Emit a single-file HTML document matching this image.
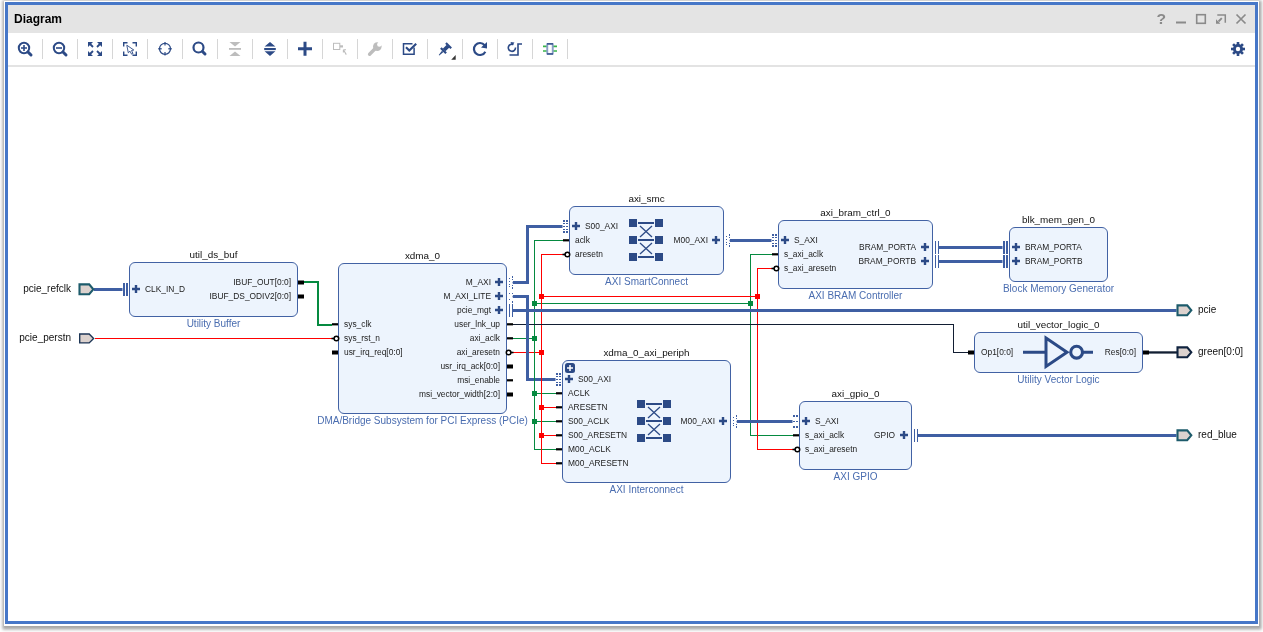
<!DOCTYPE html>
<html><head><meta charset="utf-8"><style>
html,body{margin:0;padding:0;background:#fff;width:1263px;height:632px;overflow:hidden}
svg{position:absolute;left:0;top:0;will-change:transform}
.tt{font-family:'Liberation Sans', sans-serif;font-size:9.9px;fill:#111}
.st{font-family:'Liberation Sans', sans-serif;font-size:10px;fill:#4a6db0}
.pt{font-family:'Liberation Sans', sans-serif;font-size:8.4px;fill:#222}
.lt{font-family:'Liberation Sans', sans-serif;font-size:10px;fill:#111}
</style></head><body>
<svg width="1263" height="632" viewBox="0 0 1263 632">
<defs><filter id="sh" x="-5%" y="-5%" width="110%" height="110%"><feGaussianBlur stdDeviation="1.4"/></filter></defs>
<rect x="0" y="0" width="1263" height="632" fill="#fff"/>
<rect x="2.5" y="0.5" width="1259" height="629" fill="#6a6a6a" opacity="0.6" filter="url(#sh)"/>
<rect x="4" y="1" width="1255" height="625" fill="#fff"/>
<rect x="5" y="2" width="1253" height="622" fill="#4677c8"/>
<rect x="8" y="5" width="1247" height="616" fill="#fff"/>
<rect x="8" y="5" width="1247" height="28" fill="#e4e4e4"/>
<rect x="8" y="65" width="1247" height="2" fill="#e3e3e3"/>
<text x="14" y="23" style="font: bold 12px 'Liberation Sans', sans-serif; fill:#000">Diagram</text>
<text x="1161.3" y="24" text-anchor="middle" style="font: bold 14px 'Liberation Sans', sans-serif; fill:#8a8a8a" transform="translate(1161.3 0) scale(1.12 1) translate(-1161.3 0)">?</text>
<rect x="1176" y="21.5" width="10" height="2" fill="#8a8a8a"/>
<rect x="1196.7" y="14.7" width="8.6" height="8.6" stroke="#8a8a8a" stroke-width="1.6" fill="none"/>
<path d="M1217.3 14.9H1225.3V22.7" stroke="#8a8a8a" stroke-width="1.5" fill="none"/>
<path d="M1221.8 18.2L1218.5 21.5" stroke="#8a8a8a" stroke-width="1.8" fill="none"/>
<path d="M1216 19.3V23.7H1220.4Z" fill="#8a8a8a"/>
<path d="M1236.5 14.5L1245.5 23.5M1245.5 14.5L1236.5 23.5" stroke="#8a8a8a" stroke-width="1.7"/>
<rect x="42" y="39" width="1" height="20" fill="#d6d6d6"/>
<rect x="77" y="39" width="1" height="20" fill="#d6d6d6"/>
<rect x="112" y="39" width="1" height="20" fill="#d6d6d6"/>
<rect x="147" y="39" width="1" height="20" fill="#d6d6d6"/>
<rect x="182" y="39" width="1" height="20" fill="#d6d6d6"/>
<rect x="217" y="39" width="1" height="20" fill="#d6d6d6"/>
<rect x="252" y="39" width="1" height="20" fill="#d6d6d6"/>
<rect x="287" y="39" width="1" height="20" fill="#d6d6d6"/>
<rect x="322" y="39" width="1" height="20" fill="#d6d6d6"/>
<rect x="357" y="39" width="1" height="20" fill="#d6d6d6"/>
<rect x="392" y="39" width="1" height="20" fill="#d6d6d6"/>
<rect x="427" y="39" width="1" height="20" fill="#d6d6d6"/>
<rect x="462" y="39" width="1" height="20" fill="#d6d6d6"/>
<rect x="497" y="39" width="1" height="20" fill="#d6d6d6"/>
<rect x="532" y="39" width="1" height="20" fill="#d6d6d6"/>
<rect x="567" y="39" width="1" height="20" fill="#d6d6d6"/>
<circle cx="24" cy="48.0" r="5.2" stroke="#2c4a86" stroke-width="2" fill="none"/>
<path d="M28 52L31 55" stroke="#2c4a86" stroke-width="3" stroke-linecap="round"/>
<path d="M21 48H27M24 45V51" stroke="#2c4a86" stroke-width="1.6"/>
<circle cx="59" cy="48.0" r="5.2" stroke="#2c4a86" stroke-width="2" fill="none"/>
<path d="M63 52L66 55" stroke="#2c4a86" stroke-width="3" stroke-linecap="round"/>
<path d="M56 48H62" stroke="#2c4a86" stroke-width="1.6"/>
<path d="M88 42H93L88 47Z M102 42H97L102 47Z M88 56H93L88 51Z M102 56H97L102 51Z" fill="#2c4a86"/>
<path d="M89 43L93 47M101 43L97 47M89 55L93 51M101 55L97 51" stroke="#2c4a86" stroke-width="1.8"/>
<path d="M123.7 46.5V42.7H127.5M132.5 42.7H136.3V46.5M136.3 51.5V55.3H132.5M127.5 55.3H123.7V51.5" stroke="#2c4a86" stroke-width="1.4" fill="none"/>
<path d="M126.8 45.2L128.3 52.8L130 51.2L131.6 54.2L133 53.5L131.5 50.5L133.8 50Z" stroke="#2c4a86" stroke-width="0.9" fill="#fff" stroke-linejoin="round"/>
<circle cx="165" cy="48.8" r="5.5" stroke="#2c4a86" stroke-width="1.25" fill="none"/>
<path d="M165 42V45.5M165 52.1V55.6M158.2 48.8H161.7M168.3 48.8H171.8" stroke="#2c4a86" stroke-width="1.4" opacity="0.85"/>
<circle cx="198.5" cy="47.5" r="5" stroke="#2c4a86" stroke-width="2.2" fill="none"/>
<path d="M202.5 51.5L205 54" stroke="#2c4a86" stroke-width="3" stroke-linecap="round"/>
<path d="M229.5 42H240.5L235 46.5Z M229.5 56H240.5L235 51.5Z" fill="#bdbdbd"/>
<rect x="229" y="48" width="12" height="1.8" fill="#bdbdbd"/>
<path d="M264.6 46.4H275.4L270 41.9Z M264.6 51.3H275.4L270 55.9Z" fill="#2c4a86"/>
<rect x="264.2" y="48" width="11.6" height="2.1" fill="#2c4a86"/>
<path d="M298 48.7H312M305 41.7V55.7" stroke="#2c4a86" stroke-width="3"/>
<rect x="333.5" y="43.3" width="6.3" height="6.2" stroke="#bdbdbd" stroke-width="1" fill="#fff"/>
<rect x="340" y="45.3" width="3" height="2.2" fill="#bdbdbd"/>
<path d="M346.3 54.6L343.6 50M343.4 49.8V52.6M343.4 49.8H346" stroke="#bdbdbd" stroke-width="1.1" fill="none"/>
<path d="M369.6 54.2L376 47.8" stroke="#bdbdbd" stroke-width="3.4" stroke-linecap="round"/>
<circle cx="377.3" cy="46.6" r="4.3" fill="#bdbdbd"/>
<circle cx="379.3" cy="44.5" r="2.2" fill="#fff"/>
<rect x="377.1" y="38" width="4.4" height="6.5" fill="#fff" transform="rotate(45 379.3 44.5)"/>
<path d="M412.5 43.7H403.5V54.2H414.1V47.5" stroke="#2c4a86" stroke-width="1.5" fill="none"/>
<path d="M406 47.3L409.3 50.6L416.2 43.7" stroke="#2c4a86" stroke-width="2.1" fill="none"/>
<g transform="translate(443.4 50.7) rotate(-45)" fill="#2c4a86"><rect x="-1" y="-3.7" width="2.2" height="7.4"/><rect x="1" y="-1.9" width="5.6" height="3.8"/><rect x="6.2" y="-3.7" width="2.2" height="7.4"/><path d="M-1 -1L-6.3 -0.3V0.5L-1 1Z"/></g>
<path d="M451.2 59.7H455.7V55Z" fill="#333"/>
<path d="M484.6 45.2A6 6 0 1 0 485.3 51.7" stroke="#2c4a86" stroke-width="2.2" fill="none"/>
<path d="M487 42L487 48.5L481 47.5Z" fill="#2c4a86"/>
<path d="M513.5 44.5A3.6 3.6 0 1 0 515.5 47.5" stroke="#2c4a86" stroke-width="1.6" fill="none"/>
<path d="M510.5 42L514.5 42.5L512 45.5Z" fill="#2c4a86"/>
<path d="M509.5 55H518V44H522" stroke="#2c4a86" stroke-width="1.6" fill="none"/>
<path d="M543 46.3H547M553 46.3H557M543 51H547M553 51H557" stroke="#39b54a" stroke-width="1.7"/>
<rect x="546.3" y="43.1" width="7.4" height="11.6" rx="0.8" fill="#8a9ec6"/>
<rect x="548.2" y="44.6" width="3.6" height="8.6" fill="#fff"/>
<rect x="547" y="43.1" width="6" height="1.5" fill="#2c4a86" opacity="0.9"/><rect x="547" y="53.2" width="6" height="1.5" fill="#2c4a86" opacity="0.9"/>
<g transform="translate(1238 49)" fill="#2c4a86"><circle r="5"/><rect x="-1.3" y="-7" width="2.6" height="14" transform="rotate(0)"/><rect x="-1.3" y="-7" width="2.6" height="14" transform="rotate(45)"/><rect x="-1.3" y="-7" width="2.6" height="14" transform="rotate(90)"/><rect x="-1.3" y="-7" width="2.6" height="14" transform="rotate(135)"/><circle r="2.2" fill="#fff"/></g>
<rect x="95" y="338" width="238" height="1" fill="#ff0000"/>
<path d="M304 282H318V325H332" stroke="#058a40" stroke-width="2" fill="none"/>
<rect x="513" y="338" width="22" height="1" fill="#058a40"/>
<rect x="513" y="352" width="29" height="1" fill="#ff0000"/>
<rect x="534" y="240" width="1" height="210" fill="#058a40"/>
<rect x="534" y="240" width="30" height="1" fill="#058a40"/>
<rect x="534" y="303" width="217" height="1" fill="#058a40"/>
<rect x="534" y="393" width="23" height="1" fill="#058a40"/>
<rect x="534" y="421" width="23" height="1" fill="#058a40"/>
<rect x="534" y="449" width="23" height="1" fill="#058a40"/>
<rect x="750" y="254" width="1" height="182" fill="#058a40"/>
<rect x="750" y="254" width="23" height="1" fill="#058a40"/>
<rect x="750" y="435" width="44" height="1" fill="#058a40"/>
<rect x="541" y="254" width="1" height="210" fill="#ff0000"/>
<rect x="541" y="254" width="23" height="1" fill="#ff0000"/>
<rect x="541" y="296" width="217" height="1" fill="#ff0000"/>
<rect x="541" y="407" width="16" height="1" fill="#ff0000"/>
<rect x="541" y="435" width="16" height="1" fill="#ff0000"/>
<rect x="541" y="463" width="16" height="1" fill="#ff0000"/>
<rect x="757" y="268" width="1" height="182" fill="#ff0000"/>
<rect x="757" y="268" width="16" height="1" fill="#ff0000"/>
<rect x="757" y="449" width="37" height="1" fill="#ff0000"/>
<rect x="513" y="324" width="441" height="1" fill="#121e33"/>
<rect x="953" y="324" width="1" height="29" fill="#121e33"/>
<rect x="953" y="352" width="16" height="1" fill="#121e33"/>
<rect x="1148" y="351.3" width="29" height="2.3" fill="#121e33"/>
<path d="M94 289.5H122.5" stroke="#3f5fa3" stroke-width="3" fill="none" stroke-linejoin="miter"/>
<path d="M513 282.5H527.5V226.5H562.5" stroke="#3f5fa3" stroke-width="3" fill="none" stroke-linejoin="miter"/>
<path d="M513 296.5H527.5V379.5H555.5" stroke="#3f5fa3" stroke-width="3" fill="none" stroke-linejoin="miter"/>
<path d="M513 310.5H1176.5" stroke="#3f5fa3" stroke-width="3" fill="none" stroke-linejoin="miter"/>
<path d="M730 240.5H771.5" stroke="#3f5fa3" stroke-width="3" fill="none" stroke-linejoin="miter"/>
<path d="M939 247.5H1002.5" stroke="#3f5fa3" stroke-width="3" fill="none" stroke-linejoin="miter"/>
<path d="M939 261.5H1002.5" stroke="#3f5fa3" stroke-width="3" fill="none" stroke-linejoin="miter"/>
<path d="M737 421.5H792.5" stroke="#3f5fa3" stroke-width="3" fill="none" stroke-linejoin="miter"/>
<path d="M918 435.5H1176.5" stroke="#3f5fa3" stroke-width="3" fill="none" stroke-linejoin="miter"/>
<rect x="534" y="376" width="1" height="7" fill="#058a40"/>
<rect x="541" y="376" width="1" height="7" fill="#ff0000"/>
<rect x="532" y="336" width="5" height="5" fill="#058a40"/>
<rect x="532" y="301" width="5" height="5" fill="#058a40"/>
<rect x="748" y="301" width="5" height="5" fill="#058a40"/>
<rect x="532" y="391" width="5" height="5" fill="#058a40"/>
<rect x="532" y="419" width="5" height="5" fill="#058a40"/>
<rect x="539" y="350" width="5" height="5" fill="#ff0000"/>
<rect x="539" y="294" width="5" height="5" fill="#ff0000"/>
<rect x="755" y="294" width="5" height="5" fill="#ff0000"/>
<rect x="539" y="405" width="5" height="5" fill="#ff0000"/>
<rect x="539" y="433" width="5" height="5" fill="#ff0000"/>
<polygon points="79.5,284.4 89.2,284.4 93.3,289.29999999999995 89.2,294.2 79.5,294.2" fill="#dcd2ce" stroke="#1d5b6b" stroke-width="2.1" stroke-linejoin="miter"/>
<text x="71" y="292" text-anchor="end" class="lt">pcie_refclk</text>
<polygon points="79.7,334.0 89.2,334.0 93.6,338.45 89.2,342.9 79.7,342.9" fill="#dcd2ce" stroke="#1c3555" stroke-width="1.4" stroke-linejoin="miter"/>
<text x="71" y="341" text-anchor="end" class="lt">pcie_perstn</text>
<polygon points="1177.5,305.4 1187.2,305.4 1191.3,310.29999999999995 1187.2,315.2 1177.5,315.2" fill="#dcd2ce" stroke="#1d5b6b" stroke-width="2.1" stroke-linejoin="miter"/>
<text x="1198" y="313" class="lt">pcie</text>
<polygon points="1177.5,347.4 1187.2,347.4 1191.3,352.29999999999995 1187.2,357.2 1177.5,357.2" fill="#dcd2ce" stroke="#10233f" stroke-width="2.1" stroke-linejoin="miter"/>
<text x="1198" y="355" class="lt">green[0:0]</text>
<polygon points="1177.5,430.4 1187.2,430.4 1191.3,435.29999999999995 1187.2,440.2 1177.5,440.2" fill="#dcd2ce" stroke="#1d5b6b" stroke-width="2.1" stroke-linejoin="miter"/>
<text x="1198" y="438" class="lt">red_blue</text>
<rect x="129.5" y="262.5" width="168" height="54" rx="5.5" ry="5.5" fill="#edf4fd" stroke="#4262a4" stroke-width="1"/>
<text x="213.5" y="258" text-anchor="middle" class="tt">util_ds_buf</text>
<text x="213.5" y="327" text-anchor="middle" class="st">Utility Buffer</text>
<rect x="123" y="283" width="2" height="13" fill="#3f5fa3"/>
<rect x="126" y="283" width="2" height="13" fill="#3f5fa3"/>
<path d="M132 289H140M136 285V293" stroke="#2c4a86" stroke-width="2.4" fill="none"/>
<text x="145" y="292.3" text-anchor="start" class="pt">CLK_IN_D</text>
<rect x="298" y="280.5" width="6" height="4" fill="#000"/>
<rect x="298" y="294.5" width="6" height="4" fill="#000"/>
<text x="291" y="285.3" text-anchor="end" class="pt">IBUF_OUT[0:0]</text>
<text x="291" y="299.3" text-anchor="end" class="pt">IBUF_DS_ODIV2[0:0]</text>
<rect x="338.5" y="263.5" width="168" height="150" rx="5.5" ry="5.5" fill="#edf4fd" stroke="#4262a4" stroke-width="1"/>
<text x="422.5" y="259" text-anchor="middle" class="tt">xdma_0</text>
<text x="422.5" y="424" text-anchor="middle" class="st">DMA/Bridge Subsystem for PCI Express (PCIe)</text>
<rect x="332" y="323.2" width="6" height="2.2" fill="#000"/>
<text x="344" y="327.3" text-anchor="start" class="pt">sys_clk</text>
<rect x="331.5" y="337.7" width="3.5" height="1.6" fill="#000"/>
<circle cx="336.4" cy="338.45" r="2.3" fill="#fff" stroke="#000" stroke-width="1.5"/>
<text x="344" y="341.3" text-anchor="start" class="pt">sys_rst_n</text>
<rect x="332" y="350.5" width="6" height="4" fill="#000"/>
<text x="344" y="355.3" text-anchor="start" class="pt">usr_irq_req[0:0]</text>
<path d="M495 282H503M499 278V286" stroke="#2c4a86" stroke-width="2.4" fill="none"/>
<text x="491" y="285.3" text-anchor="end" class="pt">M_AXI</text>
<path d="M495 296H503M499 292V300" stroke="#2c4a86" stroke-width="2.4" fill="none"/>
<text x="491" y="299.3" text-anchor="end" class="pt">M_AXI_LITE</text>
<path d="M495 310H503M499 306V314" stroke="#2c4a86" stroke-width="2.4" fill="none"/>
<text x="491" y="313.3" text-anchor="end" class="pt">pcie_mgt</text>
<rect x="509" y="278" width="1" height="1" fill="#3f5fa3"/>
<rect x="509" y="281" width="1" height="1" fill="#3f5fa3"/>
<rect x="509" y="284" width="1" height="1" fill="#3f5fa3"/>
<rect x="509" y="286" width="1" height="1" fill="#3f5fa3"/>
<rect x="512" y="276" width="1" height="2" fill="#3f5fa3"/>
<rect x="512" y="279" width="1" height="1" fill="#3f5fa3"/>
<rect x="512" y="285" width="1" height="1" fill="#3f5fa3"/>
<rect x="512" y="287" width="1" height="2" fill="#3f5fa3"/>
<circle cx="514" cy="282.5" r="1.5" fill="#3f5fa3"/>
<rect x="509" y="293" width="1" height="1" fill="#3f5fa3"/>
<rect x="509" y="299" width="1" height="1" fill="#3f5fa3"/>
<rect x="512" y="293" width="1" height="1" fill="#3f5fa3"/>
<rect x="512" y="301" width="1" height="2" fill="#3f5fa3"/>
<circle cx="514" cy="296.5" r="1.5" fill="#3f5fa3"/>
<rect x="509" y="304" width="1" height="13" fill="#3f5fa3"/>
<rect x="512" y="304" width="1" height="13" fill="#3f5fa3"/>
<rect x="507" y="323.2" width="6" height="2.2" fill="#000"/>
<text x="500" y="327.3" text-anchor="end" class="pt">user_lnk_up</text>
<rect x="507" y="337.2" width="6" height="2.2" fill="#000"/>
<text x="500" y="341.3" text-anchor="end" class="pt">axi_aclk</text>
<rect x="510" y="351.7" width="3.5" height="1.6" fill="#000"/>
<circle cx="508.6" cy="352.45" r="2.3" fill="#fff" stroke="#000" stroke-width="1.5"/>
<text x="500" y="355.3" text-anchor="end" class="pt">axi_aresetn</text>
<rect x="507" y="364.5" width="6" height="4" fill="#000"/>
<text x="500" y="369.3" text-anchor="end" class="pt">usr_irq_ack[0:0]</text>
<rect x="507" y="379.2" width="6" height="2.2" fill="#000"/>
<text x="500" y="383.3" text-anchor="end" class="pt">msi_enable</text>
<rect x="507" y="392.5" width="6" height="4" fill="#000"/>
<text x="500" y="397.3" text-anchor="end" class="pt">msi_vector_width[2:0]</text>
<rect x="569.5" y="206.5" width="154" height="68" rx="5.5" ry="5.5" fill="#edf4fd" stroke="#4262a4" stroke-width="1"/>
<text x="646.5" y="202" text-anchor="middle" class="tt">axi_smc</text>
<text x="646.5" y="285" text-anchor="middle" class="st">AXI SmartConnect</text>
<rect x="563" y="220" width="2" height="2" fill="#3f5fa3"/>
<rect x="563" y="231" width="2" height="2" fill="#3f5fa3"/>
<rect x="563" y="223" width="2" height="1" fill="#3f5fa3"/>
<rect x="563" y="226" width="2" height="1" fill="#3f5fa3"/>
<rect x="563" y="229" width="2" height="1" fill="#3f5fa3"/>
<rect x="566" y="220" width="2" height="2" fill="#3f5fa3"/>
<rect x="566" y="231" width="2" height="2" fill="#3f5fa3"/>
<rect x="566" y="223" width="2" height="1" fill="#3f5fa3"/>
<rect x="566" y="226" width="2" height="1" fill="#3f5fa3"/>
<rect x="566" y="229" width="2" height="1" fill="#3f5fa3"/>
<path d="M572 226H580M576 222V230" stroke="#2c4a86" stroke-width="2.4" fill="none"/>
<text x="585" y="229.3" text-anchor="start" class="pt">S00_AXI</text>
<rect x="563" y="239.2" width="6" height="2.2" fill="#000"/>
<text x="575" y="243.3" text-anchor="start" class="pt">aclk</text>
<rect x="562.5" y="253.7" width="3.5" height="1.6" fill="#000"/>
<circle cx="567.4" cy="254.45" r="2.3" fill="#fff" stroke="#000" stroke-width="1.5"/>
<text x="575" y="257.3" text-anchor="start" class="pt">aresetn</text>
<rect x="629" y="219" width="8" height="8" fill="#2c4a86"/>
<rect x="655" y="219" width="8" height="8" fill="#2c4a86"/>
<rect x="638" y="222" width="16" height="2" fill="#2c4a86"/>
<rect x="629" y="236" width="8" height="8" fill="#2c4a86"/>
<rect x="655" y="236" width="8" height="8" fill="#2c4a86"/>
<rect x="638" y="239" width="16" height="2" fill="#2c4a86"/>
<rect x="629" y="253" width="8" height="8" fill="#2c4a86"/>
<rect x="655" y="253" width="8" height="8" fill="#2c4a86"/>
<rect x="638" y="256" width="16" height="2" fill="#2c4a86"/>
<path d="M640 226L652 237M652 226L640 237M640 254L652 243M652 254L640 243" stroke="#2c4a86" stroke-width="1.3" fill="none"/>
<path d="M712 240H720M716 236V244" stroke="#2c4a86" stroke-width="2.4" fill="none"/>
<text x="708" y="243.3" text-anchor="end" class="pt">M00_AXI</text>
<rect x="726" y="236" width="1" height="1" fill="#3f5fa3"/>
<rect x="726" y="239" width="1" height="1" fill="#3f5fa3"/>
<rect x="726" y="242" width="1" height="1" fill="#3f5fa3"/>
<rect x="726" y="244" width="1" height="1" fill="#3f5fa3"/>
<rect x="729" y="234" width="1" height="2" fill="#3f5fa3"/>
<rect x="729" y="237" width="1" height="1" fill="#3f5fa3"/>
<rect x="729" y="243" width="1" height="1" fill="#3f5fa3"/>
<rect x="729" y="245" width="1" height="2" fill="#3f5fa3"/>
<circle cx="731" cy="240.5" r="1.5" fill="#3f5fa3"/>
<rect x="778.5" y="220.5" width="154" height="68" rx="5.5" ry="5.5" fill="#edf4fd" stroke="#4262a4" stroke-width="1"/>
<text x="855.5" y="216" text-anchor="middle" class="tt">axi_bram_ctrl_0</text>
<text x="855.5" y="299" text-anchor="middle" class="st">AXI BRAM Controller</text>
<rect x="772" y="234" width="2" height="2" fill="#3f5fa3"/>
<rect x="772" y="245" width="2" height="2" fill="#3f5fa3"/>
<rect x="772" y="237" width="2" height="1" fill="#3f5fa3"/>
<rect x="772" y="240" width="2" height="1" fill="#3f5fa3"/>
<rect x="772" y="243" width="2" height="1" fill="#3f5fa3"/>
<rect x="775" y="234" width="2" height="2" fill="#3f5fa3"/>
<rect x="775" y="245" width="2" height="2" fill="#3f5fa3"/>
<rect x="775" y="237" width="2" height="1" fill="#3f5fa3"/>
<rect x="775" y="240" width="2" height="1" fill="#3f5fa3"/>
<rect x="775" y="243" width="2" height="1" fill="#3f5fa3"/>
<path d="M781 240H789M785 236V244" stroke="#2c4a86" stroke-width="2.4" fill="none"/>
<text x="794" y="243.3" text-anchor="start" class="pt">S_AXI</text>
<rect x="772" y="253.2" width="6" height="2.2" fill="#000"/>
<text x="784" y="257.3" text-anchor="start" class="pt">s_axi_aclk</text>
<rect x="771.5" y="267.7" width="3.5" height="1.6" fill="#000"/>
<circle cx="776.4" cy="268.45" r="2.3" fill="#fff" stroke="#000" stroke-width="1.5"/>
<text x="784" y="271.3" text-anchor="start" class="pt">s_axi_aresetn</text>
<path d="M921 247H929M925 243V251" stroke="#2c4a86" stroke-width="2.4" fill="none"/>
<text x="916" y="250.3" text-anchor="end" class="pt">BRAM_PORTA</text>
<path d="M921 261H929M925 257V265" stroke="#2c4a86" stroke-width="2.4" fill="none"/>
<text x="916" y="264.3" text-anchor="end" class="pt">BRAM_PORTB</text>
<rect x="935" y="241" width="1" height="13" fill="#3f5fa3"/>
<rect x="938" y="241" width="1" height="13" fill="#3f5fa3"/>
<rect x="935" y="255" width="1" height="13" fill="#3f5fa3"/>
<rect x="938" y="255" width="1" height="13" fill="#3f5fa3"/>
<rect x="1009.5" y="227.5" width="98" height="54" rx="5.5" ry="5.5" fill="#edf4fd" stroke="#4262a4" stroke-width="1"/>
<text x="1058.5" y="223" text-anchor="middle" class="tt">blk_mem_gen_0</text>
<text x="1058.5" y="292" text-anchor="middle" class="st">Block Memory Generator</text>
<rect x="1003" y="241" width="2" height="13" fill="#3f5fa3"/>
<rect x="1006" y="241" width="2" height="13" fill="#3f5fa3"/>
<rect x="1003" y="255" width="2" height="13" fill="#3f5fa3"/>
<rect x="1006" y="255" width="2" height="13" fill="#3f5fa3"/>
<path d="M1012 247H1020M1016 243V251" stroke="#2c4a86" stroke-width="2.4" fill="none"/>
<text x="1025" y="250.3" text-anchor="start" class="pt">BRAM_PORTA</text>
<path d="M1012 261H1020M1016 257V265" stroke="#2c4a86" stroke-width="2.4" fill="none"/>
<text x="1025" y="264.3" text-anchor="start" class="pt">BRAM_PORTB</text>
<rect x="974.5" y="332.5" width="168" height="40" rx="5.5" ry="5.5" fill="#edf4fd" stroke="#4262a4" stroke-width="1"/>
<text x="1058.5" y="328" text-anchor="middle" class="tt">util_vector_logic_0</text>
<text x="1058.5" y="383" text-anchor="middle" class="st">Utility Vector Logic</text>
<rect x="968" y="350.5" width="6" height="4" fill="#000"/>
<text x="981" y="355.3" text-anchor="start" class="pt">Op1[0:0]</text>
<rect x="1143" y="350.5" width="6" height="4" fill="#000"/>
<text x="1136" y="355.3" text-anchor="end" class="pt">Res[0:0]</text>
<path d="M1023 352.2H1046M1083 352.2H1093" stroke="#2c4a86" stroke-width="3" fill="none"/>
<path d="M1046 338L1067 352.2L1046 366.5Z" stroke="#2c4a86" stroke-width="3" fill="none" stroke-linejoin="miter"/>
<circle cx="1076.6" cy="352.2" r="5.9" stroke="#2c4a86" stroke-width="3.1" fill="none"/>
<rect x="562.5" y="360.5" width="168" height="122" rx="5.5" ry="5.5" fill="#edf4fd" stroke="#4262a4" stroke-width="1"/>
<text x="646.5" y="356" text-anchor="middle" class="tt">xdma_0_axi_periph</text>
<text x="646.5" y="493" text-anchor="middle" class="st">AXI Interconnect</text>
<rect x="565" y="363" width="10" height="10" rx="2.5" fill="#2c4a86"/>
<path d="M567 368H573M570 365V371" stroke="#fff" stroke-width="1.5" fill="none"/>
<rect x="556" y="373" width="2" height="2" fill="#3f5fa3"/>
<rect x="556" y="384" width="2" height="2" fill="#3f5fa3"/>
<rect x="556" y="376" width="2" height="1" fill="#3f5fa3"/>
<rect x="556" y="379" width="2" height="1" fill="#3f5fa3"/>
<rect x="556" y="382" width="2" height="1" fill="#3f5fa3"/>
<rect x="559" y="373" width="2" height="2" fill="#3f5fa3"/>
<rect x="559" y="384" width="2" height="2" fill="#3f5fa3"/>
<rect x="559" y="376" width="2" height="1" fill="#3f5fa3"/>
<rect x="559" y="379" width="2" height="1" fill="#3f5fa3"/>
<rect x="559" y="382" width="2" height="1" fill="#3f5fa3"/>
<path d="M565 379H573M569 375V383" stroke="#2c4a86" stroke-width="2.4" fill="none"/>
<text x="578" y="382.3" text-anchor="start" class="pt">S00_AXI</text>
<rect x="556" y="392.2" width="6" height="2.2" fill="#000"/>
<text x="568" y="396.3" text-anchor="start" class="pt">ACLK</text>
<rect x="556" y="406.2" width="6" height="2.2" fill="#000"/>
<text x="568" y="410.3" text-anchor="start" class="pt">ARESETN</text>
<rect x="556" y="420.2" width="6" height="2.2" fill="#000"/>
<text x="568" y="424.3" text-anchor="start" class="pt">S00_ACLK</text>
<rect x="556" y="434.2" width="6" height="2.2" fill="#000"/>
<text x="568" y="438.3" text-anchor="start" class="pt">S00_ARESETN</text>
<rect x="556" y="448.2" width="6" height="2.2" fill="#000"/>
<text x="568" y="452.3" text-anchor="start" class="pt">M00_ACLK</text>
<rect x="556" y="462.2" width="6" height="2.2" fill="#000"/>
<text x="568" y="466.3" text-anchor="start" class="pt">M00_ARESETN</text>
<rect x="637" y="400" width="8" height="8" fill="#2c4a86"/>
<rect x="663" y="400" width="8" height="8" fill="#2c4a86"/>
<rect x="646" y="403" width="16" height="2" fill="#2c4a86"/>
<rect x="637" y="417" width="8" height="8" fill="#2c4a86"/>
<rect x="663" y="417" width="8" height="8" fill="#2c4a86"/>
<rect x="646" y="420" width="16" height="2" fill="#2c4a86"/>
<rect x="637" y="434" width="8" height="8" fill="#2c4a86"/>
<rect x="663" y="434" width="8" height="8" fill="#2c4a86"/>
<rect x="646" y="437" width="16" height="2" fill="#2c4a86"/>
<path d="M648 407L660 418M660 407L648 418M648 435L660 424M660 435L648 424" stroke="#2c4a86" stroke-width="1.3" fill="none"/>
<path d="M719 421H727M723 417V425" stroke="#2c4a86" stroke-width="2.4" fill="none"/>
<text x="715" y="424.3" text-anchor="end" class="pt">M00_AXI</text>
<rect x="733" y="417" width="1" height="1" fill="#3f5fa3"/>
<rect x="733" y="420" width="1" height="1" fill="#3f5fa3"/>
<rect x="733" y="423" width="1" height="1" fill="#3f5fa3"/>
<rect x="733" y="425" width="1" height="1" fill="#3f5fa3"/>
<rect x="736" y="415" width="1" height="2" fill="#3f5fa3"/>
<rect x="736" y="418" width="1" height="1" fill="#3f5fa3"/>
<rect x="736" y="424" width="1" height="1" fill="#3f5fa3"/>
<rect x="736" y="426" width="1" height="2" fill="#3f5fa3"/>
<circle cx="738" cy="421.5" r="1.5" fill="#3f5fa3"/>
<rect x="799.5" y="401.5" width="112" height="68" rx="5.5" ry="5.5" fill="#edf4fd" stroke="#4262a4" stroke-width="1"/>
<text x="855.5" y="397" text-anchor="middle" class="tt">axi_gpio_0</text>
<text x="855.5" y="480" text-anchor="middle" class="st">AXI GPIO</text>
<rect x="793" y="415" width="2" height="2" fill="#3f5fa3"/>
<rect x="793" y="426" width="2" height="2" fill="#3f5fa3"/>
<rect x="793" y="421" width="2" height="1" fill="#3f5fa3"/>
<rect x="796" y="415" width="2" height="2" fill="#3f5fa3"/>
<rect x="796" y="426" width="2" height="2" fill="#3f5fa3"/>
<rect x="796" y="421" width="2" height="1" fill="#3f5fa3"/>
<path d="M802 421H810M806 417V425" stroke="#2c4a86" stroke-width="2.4" fill="none"/>
<text x="815" y="424.3" text-anchor="start" class="pt">S_AXI</text>
<rect x="793" y="434.2" width="6" height="2.2" fill="#000"/>
<text x="805" y="438.3" text-anchor="start" class="pt">s_axi_aclk</text>
<rect x="792.5" y="448.7" width="3.5" height="1.6" fill="#000"/>
<circle cx="797.4" cy="449.45" r="2.3" fill="#fff" stroke="#000" stroke-width="1.5"/>
<text x="805" y="452.3" text-anchor="start" class="pt">s_axi_aresetn</text>
<path d="M900 435H908M904 431V439" stroke="#2c4a86" stroke-width="2.4" fill="none"/>
<text x="895" y="438.3" text-anchor="end" class="pt">GPIO</text>
<rect x="914" y="429" width="1" height="13" fill="#3f5fa3"/>
<rect x="917" y="429" width="1" height="13" fill="#3f5fa3"/>
</svg>
</body></html>
